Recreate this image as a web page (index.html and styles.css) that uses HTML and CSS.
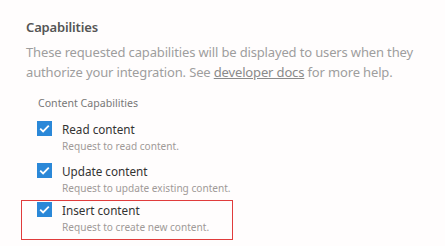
FILE: index.html
```html
<!DOCTYPE html>
<html>
<head>
<meta charset="utf-8">
<link rel="stylesheet" href="styles.css">
</head>
<body>
<section class="panel">
  <h2 class="title">Capabilities</h2>
  <p class="desc">These requested capabilities will be displayed to users when they<br>authorize your integration. See <a class="link" href="#">developer docs</a> for more help.</p>
  <div class="group">
    <div class="group-label">Content Capabilities</div>
    <div class="option">
      <span class="box"><svg viewBox="0 0 15 15" width="15" height="15"><path d="M3.2 7.6 L6.1 10.4 L11.8 4.6" fill="none" stroke="#fff" stroke-width="1.8"/></svg></span>
      <div class="text">
        <div class="name">Read content</div>
        <div class="hint">Request to read content.</div>
      </div>
    </div>
    <div class="option">
      <span class="box"><svg viewBox="0 0 15 15" width="15" height="15"><path d="M3.2 7.6 L6.1 10.4 L11.8 4.6" fill="none" stroke="#fff" stroke-width="1.8"/></svg></span>
      <div class="text">
        <div class="name">Update content</div>
        <div class="hint">Request to update existing content.</div>
      </div>
    </div>
    <div class="option focused">
      <span class="box"><svg viewBox="0 0 15 15" width="15" height="15"><path d="M3.2 7.6 L6.1 10.4 L11.8 4.6" fill="none" stroke="#fff" stroke-width="1.8"/></svg></span>
      <div class="text">
        <div class="name">Insert content</div>
        <div class="hint">Request to create new content.</div>
      </div>
    </div>
  </div>
</section>
</body>
</html>
```
FILE: styles.css
```css
html, body {
  margin: 0;
  background: #fffdfd;
}
body {
  font-family: "Noto Sans", "Open Sans", sans-serif;
}
.panel {
  padding: 17px 0 0 26px;
}
.title {
  margin: 0;
  font-size: 13px;
  font-weight: 600;
  color: #555;
  line-height: 20px;
  letter-spacing: -0.15px;
}
.desc {
  margin: 5px 0 0;
  font-size: 13px;
  letter-spacing: -0.15px;
  line-height: 20px;
  color: #9e9e9e;
  white-space: nowrap;
}
.link {
  color: #8a8a8a;
  text-decoration: underline;
}
.group {
  margin: 13px 0 0 12px;
}
.group-label {
  font-size: 10.6px;
  color: #777;
  line-height: 16px;
  margin-bottom: 7px;
}
.option {
  display: flex;
  align-items: flex-start;
  gap: 10px;
  height: 41px;
  box-sizing: border-box;
  padding-top: 2px;
  margin-left: -17px;
  padding-left: 16px;
  width: 212px;
}
.option:nth-child(3) {
  padding-top: 3px;
}
.box {
  width: 15px;
  height: 15px;
  background: #2b88d8;
  display: block;
  margin-top: 1px;
  flex: none;
}
.box svg { display: block; }
.name {
  font-size: 11.7px;
  color: #333;
  line-height: 18px;
  white-space: nowrap;
}
.hint {
  font-size: 10.1px;
  color: #a09a98;
  line-height: 16px;
  white-space: nowrap;
}
.focused {
  height: 40px;
  padding-top: 1px;
  outline: 1px solid #e03c3c;
  outline-offset: -1px;
}
```
